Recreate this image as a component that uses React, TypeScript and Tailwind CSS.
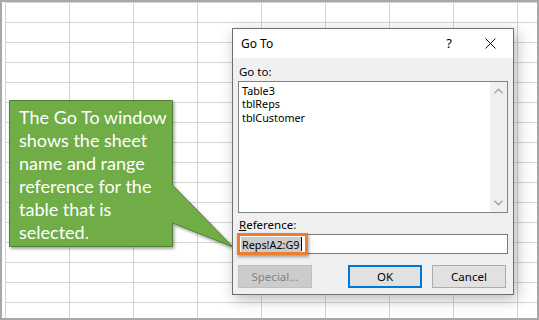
import React from "react";

const rows = Array.from({ length: 16 }, (_, i) => i);
const cols = Array.from({ length: 9 }, (_, i) => i);

const names = ["Table3", "tblReps", "tblCustomer"];

const Chevron: React.FunctionComponent<{ up?: boolean }> = ({ up }) => {
    return (
        <svg width="9" height="6" viewBox="0 0 9 6" className="text-[#a3a3a3]">
            <path
                d={up ? "M0.5 5.2 L4.5 1.2 L8.5 5.2" : "M0.5 0.8 L4.5 4.8 L8.5 0.8"}
                fill="none"
                stroke="currentColor"
                strokeWidth="1.4"
            />
        </svg>
    );
};

const GoToDialog: React.FunctionComponent = () => {
    return (
        <div className="absolute left-[230px] top-[26px] w-[282px] h-[267px] flex flex-col border border-[#6f6f6f] bg-[#f0f0f0] shadow-[3px_4px_14px_rgba(0,0,0,0.28)] font-['Segoe_UI','Noto_Sans',sans-serif] text-[11.5px] text-black">
            {/* title bar */}
            <div className="h-[29px] bg-white flex items-center pl-[8px] pr-[17px]">
                <span className="flex-1 text-[12px]">Go To</span>
                <span className="w-[20px] text-center text-[13px] mr-[26px]">?</span>
                <svg width="11" height="11" viewBox="0 0 11 11">
                    <path d="M0.5 0.5 L10.5 10.5 M10.5 0.5 L0.5 10.5" stroke="#111" strokeWidth="1" />
                </svg>
            </div>
            <div className="flex-1 flex flex-col px-[5px] pt-[6px]">
                <div className="h-[16px] leading-[16px] pl-[1px]">Go to:</div>
                <div className="mt-[1px] h-[132px] flex border border-[#828282] bg-white">
                    <div className="flex-1 pt-[2px] pl-[3px] text-[10.8px]">
                        {names.map((n) => {
                            return (
                                <div key={n} className="h-[13.4px] leading-[13.4px]">
                                    {n}
                                </div>
                            );
                        })}
                    </div>
                    <div className="w-[17px] bg-[#f0f0f0] flex flex-col items-center justify-between pt-[6px] pb-[6px]">
                        <Chevron up />
                        <Chevron />
                    </div>
                </div>
                <div className="mt-[4px] h-[16px] leading-[16px] pl-[1px]">
                    <span className="underline">R</span>eference:
                </div>
                <div className="relative mt-[1px] h-[20px] flex items-center border border-[#7a7a7a] bg-white pl-[2px]">
                    <span className="bg-[#cccccc] leading-[15px] px-[1px] text-[10.8px]">Reps!A2:G9</span>
                    <span className="w-[1px] h-[14px] bg-black" />
                    <div className="absolute left-[-2px] top-[-2px] w-[71px] h-[22px] border-[3px] border-[#ed7d31] shadow-[1px_2px_3px_rgba(0,0,0,0.35)]" />
                </div>
                <div className="mt-[11px] flex">
                    <div className="w-[74px] h-[23px] flex items-center justify-center border border-[#bfbfbf] bg-[#cccccc] text-[#838383]">
                        Special...
                    </div>
                    <div className="ml-[36px] w-[74px] h-[23px] flex items-center justify-center border-2 border-[#0078d7] bg-[#e1e1e1]">
                        OK
                    </div>
                    <div className="ml-[10px] w-[74px] h-[23px] flex items-center justify-center border border-[#adadad] bg-[#e1e1e1]">
                        Cancel
                    </div>
                </div>
            </div>
        </div>
    );
};

const Callout: React.FunctionComponent = () => {
    return (
        <>
            <svg className="absolute left-0 top-0" width="539" height="320" viewBox="0 0 539 320">
                <defs>
                    <filter id="sh" x="-20%" y="-20%" width="140%" height="140%">
                        <feDropShadow dx="1.5" dy="2" stdDeviation="1.5" floodColor="#000" floodOpacity="0.35" />
                    </filter>
                </defs>
                <path
                    d="M7.5 98.5 H170.5 V183 L231 245 L170.5 221 V244.5 H7.5 Z"
                    fill="#70ad47"
                    stroke="#507e32"
                    strokeWidth="1"
                    filter="url(#sh)"
                />
            </svg>
            <div className="absolute left-[8px] top-[104px] w-[162px] pl-[9px] text-white text-[18px] leading-[23px] font-['Lato',sans-serif]">
                The Go To window shows the sheet name and range reference for the table that is selected.
            </div>
        </>
    );
};

const App: React.FunctionComponent = () => {
    return (
        <div className="w-[539px] h-[320px] relative overflow-hidden bg-white border-2 border-[#a8a8a8]">
            <div className="pl-[3px]">
                {rows.map((r) => {
                    return (
                        <div key={r} className="flex h-[20px]">
                            {cols.map((c) => {
                                return <div key={c} className="shrink-0 w-[64px] h-[20px] border-l border-t border-[#d4d4d4]" />;
                            })}
                        </div>
                    );
                })}
            </div>
            <Callout />
            <GoToDialog />
        </div>
    );
};

export default App;
